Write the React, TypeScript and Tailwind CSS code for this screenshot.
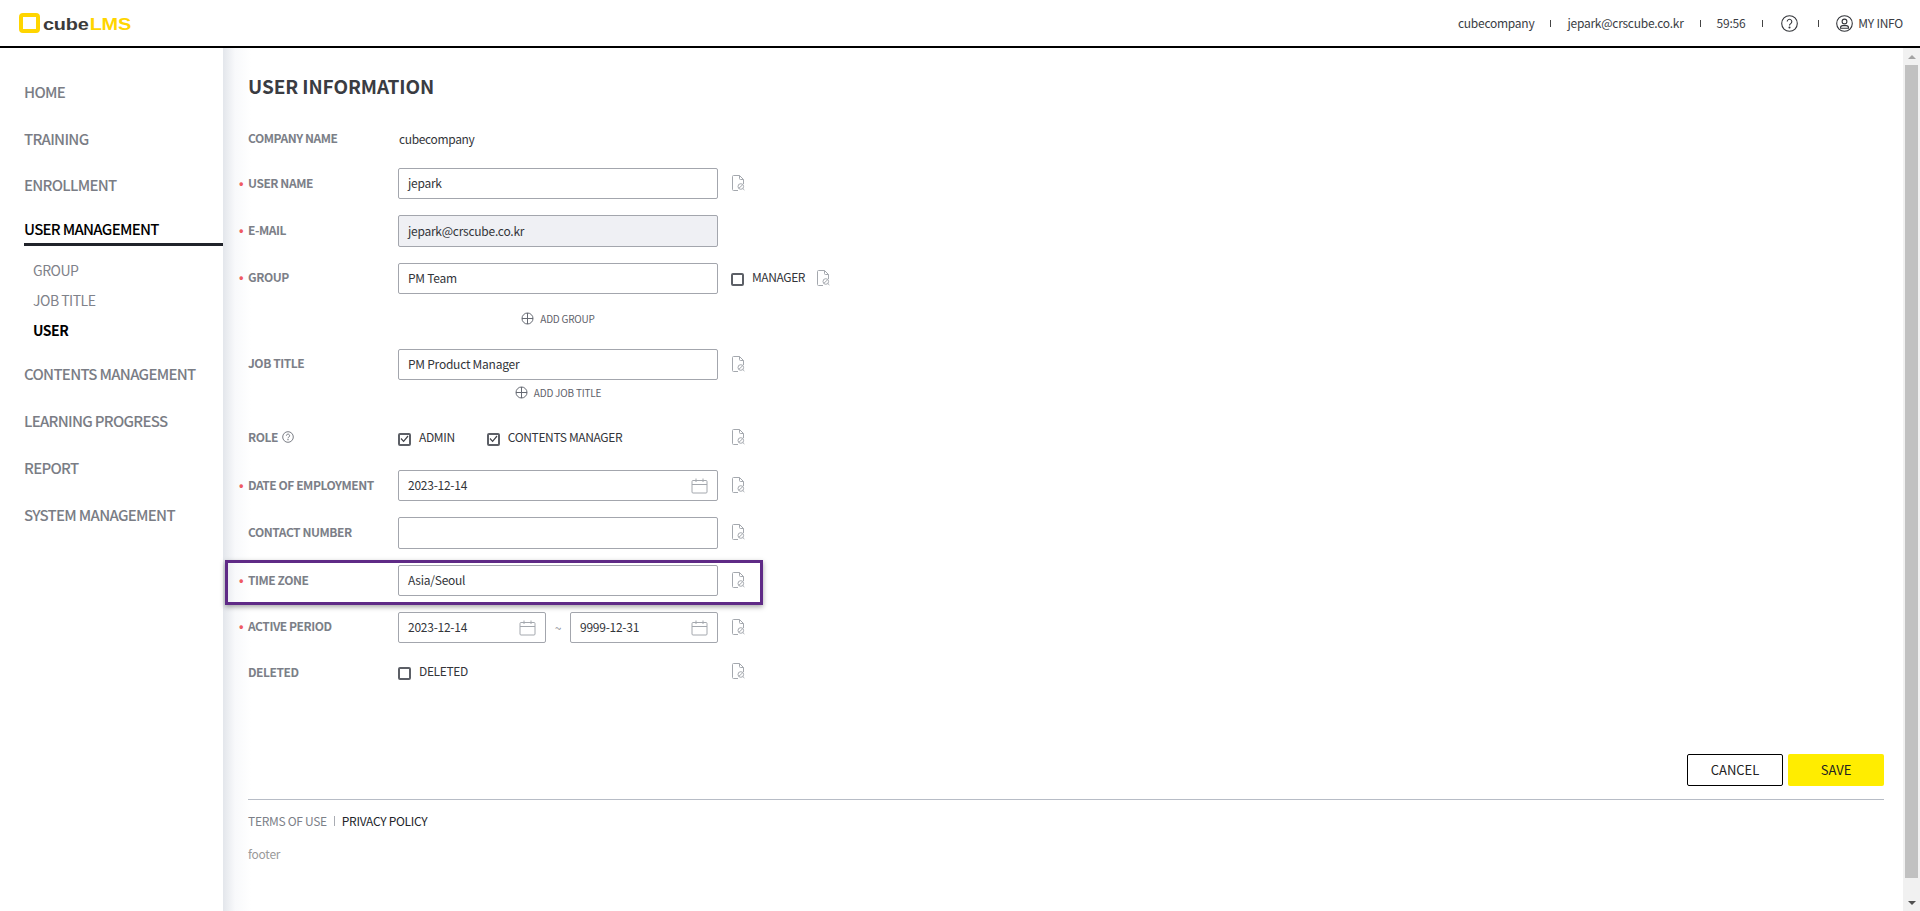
import React from 'react';

const FONT = "font-['Noto_Sans_CJK_KR','Noto_Sans',sans-serif]";

function DocIcon() {
  return (
    <svg width="13" height="16" viewBox="0 0 13 16" fill="none" stroke="#a4a8ae" strokeWidth="1" className="shrink-0 -mt-[2px]">
      <path d="M6 15.5H1.5a1 1 0 0 1-1-1v-13a1 1 0 0 1 1-1h6l4 4v4.5" />
      <path d="M7.5.5v3a1 1 0 0 0 1 1h3" />
      <circle cx="8.8" cy="11.5" r="2.8" />
      <path d="M7 13.2l3.6-3.4M10.9 13.6l1.5 1.4" />
    </svg>
  );
}

function CalendarIcon() {
  return (
    <svg width="17" height="16" viewBox="0 0 17 16" fill="none" stroke="#a4a8ae" strokeWidth="1" className="shrink-0">
      <rect x="1" y="2.5" width="15" height="12.5" rx="1" />
      <path d="M1 6.5h15M5 .5v3.5M12 .5v3.5" />
    </svg>
  );
}

function PlusCircle() {
  return (
    <svg width="13" height="13" viewBox="0 0 13 13" fill="none" stroke="#666a73" strokeWidth="1" className="shrink-0">
      <circle cx="6.5" cy="6.5" r="5.5" />
      <path d="M1 6.5h11M6.5 1v11" />
    </svg>
  );
}

function Checkbox({ checked }: { checked?: boolean }) {
  return (
    <span className="w-[13px] h-[13px] border-2 border-[#5c5f66] rounded-[2px] flex items-center justify-center shrink-0 mt-[2px]">
      {checked && (
        <svg width="9" height="8" viewBox="0 0 9 8" fill="none" stroke="#3f4147" strokeWidth="1.2">
          <path d="M1 3.5l2.6 2.8L8 1" />
        </svg>
      )}
    </span>
  );
}

function Row({ label, required, className, labelClass = '-mt-[2px]', children }: { label?: React.ReactNode; required?: boolean; className: string; labelClass?: string; children?: React.ReactNode }) {
  return (
    <div className={`flex items-center ${className}`}>
      <div className={`relative w-[150px] shrink-0 text-[12px] font-bold tracking-[-0.45px] text-[#7c7f88] ${labelClass}`}>
        {required && <span className="absolute -left-[9px] top-0 text-[#ef5a63]">•</span>}
        {label}
      </div>
      {children}
    </div>
  );
}

function Field({ value, disabled, calendar, className = 'w-[320px]' }: { value?: string; disabled?: boolean; calendar?: boolean; className?: string }) {
  return (
    <div className={`h-full flex items-center justify-between pl-[8px] pr-[9px] border border-[#a3a6ad] rounded-[2px] text-[12px] text-[#33353a] ${disabled ? 'bg-[#eff0f4]' : 'bg-white'} ${className}`}>
      <span className="-mt-[1px] pl-[1px]">{value}</span>
      {calendar && <CalendarIcon />}
    </div>
  );
}

const sideTop = 'text-[15px] font-medium tracking-[-0.7px] text-[#7a7d85] leading-[22px]';
const sideSub = 'text-[14px] tracking-[-0.5px] text-[#7f828a] leading-[20px] pl-[9px]';

export default function App() {
  return (
    <div className={`h-screen flex flex-col overflow-hidden bg-white tracking-[-0.25px] ${FONT}`}>
      <header className="h-[48px] shrink-0 border-b-2 border-black flex items-center justify-between">
        <div className="flex items-center pl-[19px]">
          <span className="w-[21px] h-[20px] border-[4px] border-[#ffd500] rounded-[4px]" />
          <span className="ml-[3px] mt-[3px] text-[17px] leading-[20px] font-bold tracking-[-0.2px] font-['Liberation_Sans',sans-serif] text-[#3b3b3b] scale-x-[1.17] origin-left">
            cube<span className="text-[#ffd500] ml-[1px]">LMS</span>
          </span>
        </div>
        <div className="flex items-center pr-[17px] text-[12px] text-[#3a3d44]">
          <span>cubecompany</span>
          <span className="w-px h-[7px] bg-[#444] mx-4" />
          <span>jepark@crscube.co.kr</span>
          <span className="w-px h-[7px] bg-[#444] mx-4" />
          <span>59:56</span>
          <span className="w-px h-[7px] bg-[#444] ml-[17px] mr-[18px]" />
          <svg width="17" height="17" viewBox="0 0 17 17" fill="none" stroke="#33353a" strokeWidth="1.1" className="mt-[1px]">
            <circle cx="8.5" cy="8.5" r="7.8" />
            <path d="M6.2 6.6a2.3 2.3 0 1 1 3.5 2c-.8.5-1.2.9-1.2 1.9" />
            <circle cx="8.5" cy="12.5" r=".5" fill="#33353a" />
          </svg>
          <span className="w-px h-[7px] bg-[#444] ml-[20px] mr-[17px]" />
          <svg width="17" height="17" viewBox="0 0 17 17" fill="none" stroke="#33353a" strokeWidth="1.1" className="mt-[1px]">
            <circle cx="8.5" cy="8.5" r="7.8" />
            <circle cx="8.5" cy="6.5" r="2.4" />
            <path d="M4.5 12.8c0-1.6 1-2.2 2.2-2.2h3.6c1.2 0 2.2.6 2.2 2.2v.4h-8z" />
          </svg>
          <span className="ml-[5px]">MY INFO</span>
        </div>
      </header>

      <div className="flex-1 min-h-0 flex">
        <aside className="w-[223px] shrink-0 pl-[24px] pt-[33px] bg-white">
          <div className={sideTop}>HOME</div>
          <div className={`${sideTop} mt-[25px]`}>TRAINING</div>
          <div className={`${sideTop} mt-[24px]`}>ENROLLMENT</div>
          <div className={`${sideTop} mt-[22px] font-bold text-black pb-[3px] border-b-[3px] border-[#20232a]`}>USER MANAGEMENT</div>
          <div className={`${sideSub} mt-[14px]`}>GROUP</div>
          <div className={`${sideSub} mt-[10px]`}>JOB TITLE</div>
          <div className={`${sideSub} mt-[10px] font-bold text-black`}>USER</div>
          <div className={`${sideTop} mt-[23px]`}>CONTENTS MANAGEMENT</div>
          <div className={`${sideTop} mt-[25px]`}>LEARNING PROGRESS</div>
          <div className={`${sideTop} mt-[25px]`}>REPORT</div>
          <div className={`${sideTop} mt-[25px]`}>SYSTEM MANAGEMENT</div>
        </aside>

        <main className="relative flex-1 min-w-0 pl-[25px] pr-[19px] bg-[linear-gradient(90deg,#e3e6eb,#f8f9fb_12px,#ffffff_28px)]">
          <h1 className="mt-[27px] h-[22px] leading-[22px] text-[19px] font-bold tracking-[-0.1px] text-[#3a3c42]">USER INFORMATION</h1>

          <Row label="COMPANY NAME" className="mt-[26px] h-[32px]">
            <span className="text-[12px] text-[#33353a] pl-px -mt-[1px] tracking-[-0.35px]">cubecompany</span>
          </Row>
          <Row label="USER NAME" required className="mt-[13px] h-[31px]">
            <Field value="jepark" />
            <span className="ml-[14px]"><DocIcon /></span>
          </Row>
          <Row label="E-MAIL" required className="mt-[16px] h-[32px]">
            <Field value="jepark@crscube.co.kr" disabled />
          </Row>
          <Row label="GROUP" required labelClass="-mt-[3px]" className="mt-[16px] h-[31px]">
            <Field value="PM Team" />
            <span className="ml-[13px]"><Checkbox /></span>
            <span className="ml-[8px] text-[12px] tracking-[-0.4px] text-[#33353a] -mt-[3px]">MANAGER</span>
            <span className="ml-[12px]"><DocIcon /></span>
          </Row>
          <Row className="mt-[14px] h-[20px]">
            <div className="w-[320px] flex items-center justify-center gap-[6px] text-[10px] tracking-[-0.2px] text-[#5f626b]">
              <PlusCircle />
              <span>ADD GROUP</span>
            </div>
          </Row>
          <Row label="JOB TITLE" labelClass="-mt-[4px]" className="mt-[21px] h-[31px]">
            <Field value="PM Product Manager" />
            <span className="ml-[14px]"><DocIcon /></span>
          </Row>
          <Row className="mt-[2px] h-[20px]">
            <div className="w-[320px] flex items-center justify-center gap-[6px] text-[10px] tracking-[-0.2px] text-[#5f626b]">
              <PlusCircle />
              <span>ADD JOB TITLE</span>
            </div>
          </Row>
          <Row
            label={
              <span className="flex items-center gap-[4px]">
                ROLE
                <svg width="12" height="12" viewBox="0 0 12 12" fill="none" stroke="#6c6f78" strokeWidth="0.9">
                  <circle cx="6" cy="6" r="5.3" />
                  <path d="M4.4 4.7a1.6 1.6 0 1 1 2.5 1.3c-.6.4-.9.7-.9 1.3" />
                  <circle cx="6" cy="8.8" r=".3" />
                </svg>
              </span>
            }
            className="mt-[26px] h-[20px]"
          >
            <div className="w-[320px] flex items-center text-[12px] tracking-[-0.35px] text-[#33353a]">
              <Checkbox checked />
              <span className="ml-[8px] -mt-[3px]">ADMIN</span>
              <span className="ml-[32px]"><Checkbox checked /></span>
              <span className="ml-[8px] -mt-[3px]">CONTENTS MANAGER</span>
            </div>
            <span className="ml-[14px]"><DocIcon /></span>
          </Row>
          <Row label="DATE OF EMPLOYMENT" required className="mt-[22px] h-[31px]">
            <Field value="2023-12-14" calendar />
            <span className="ml-[14px]"><DocIcon /></span>
          </Row>
          <Row label="CONTACT NUMBER" className="mt-[16px] h-[32px]">
            <Field />
            <span className="ml-[14px]"><DocIcon /></span>
          </Row>
          <Row label="TIME ZONE" required className="mt-[16px] h-[31px]">
            <Field value="Asia/Seoul" />
            <span className="ml-[14px]"><DocIcon /></span>
          </Row>
          <Row label="ACTIVE PERIOD" required labelClass="-mt-[3px]" className="mt-[16px] h-[31px]">
            <div className="w-[320px] h-full flex items-center">
              <Field value="2023-12-14" calendar className="w-[148px]" />
              <span className="w-[24px] text-center text-[12px] text-[#8a8d94]">~</span>
              <Field value="9999-12-31" calendar className="w-[148px]" />
            </div>
            <span className="ml-[14px]"><DocIcon /></span>
          </Row>
          <Row label="DELETED" labelClass="mt-0" className="mt-[19px] h-[20px]">
            <div className="w-[320px] flex items-center text-[12px] tracking-[-0.35px] text-[#33353a]">
              <Checkbox />
              <span className="ml-[8px] -mt-[3px]">DELETED</span>
            </div>
            <span className="ml-[14px]"><DocIcon /></span>
          </Row>

          <div className="mt-[72px] flex justify-end gap-[5px] tracking-normal">
            <button className="w-[96px] h-[32px] border border-black rounded-[2px] bg-white text-[13px] text-[#222]">CANCEL</button>
            <button className="w-[96px] h-[32px] rounded-[2px] bg-[#ffed00] text-[13px] text-[#222]">SAVE</button>
          </div>
          <div className="mt-[13px] h-px bg-[#b7bcc6]" />
          <div className="mt-[13px] h-[16px] flex items-center text-[12px] leading-[16px] tracking-[-0.3px]">
            <span className="text-[#7c7f88]">TERMS OF USE</span>
            <span className="w-px h-[10px] bg-[#a9acb3] mx-[7px]" />
            <span className="text-[#22252b]">PRIVACY POLICY</span>
          </div>
          <div className="mt-[17px] h-[16px] leading-[16px] text-[12px] text-[#9a9a9a]">footer</div>

          {/* highlight annotation over the time zone row */}
          <div className="absolute left-[2px] top-[512px] w-[538px] h-[45px] border-[3px] border-[#5f2a86] shadow-[0_2px_5px_rgba(0,0,0,0.35)]" />
        </main>

        <div className="w-[17px] shrink-0 bg-[#f1f1f1] flex flex-col items-center">
          <div className="h-[17px] w-full flex items-center justify-center">
            <span className="border-x-[4px] border-x-transparent border-b-[4px] border-b-[#a3a3a3]" />
          </div>
          <div className="w-[13px] h-[813px] bg-[#c1c1c1]" />
          <div className="flex-1" />
          <div className="h-[17px] w-full flex items-center justify-center">
            <span className="border-x-[4px] border-x-transparent border-t-[4px] border-t-[#505050]" />
          </div>
        </div>
      </div>
    </div>
  );
}
